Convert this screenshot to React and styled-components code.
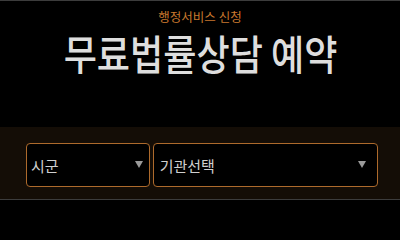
import React from "react";
import styled, { createGlobalStyle } from "styled-components";

const Global = createGlobalStyle`
  html, body { margin: 0; padding: 0; background: #000; }
  body { font-family: "Noto Sans CJK KR", "Noto Sans", sans-serif; }
`;

const Page = styled.div`
  width: 400px;
  height: 200px;
  display: flex;
  flex-direction: column;
  border-top: 1px solid #3c3c3c;
  border-bottom: 1px solid #3c3c3c;
  box-sizing: border-box;
  background: #000;
  overflow: hidden;
`;

const Header = styled.header`
  height: 126px;
  display: flex;
  flex-direction: column;
  align-items: center;
  padding-top: 7px;
  box-sizing: border-box;
`;

const Eyebrow = styled.div`
  font-size: 12.5px;
  line-height: 18px;
  color: #c8782e;
`;

const Title = styled.h1`
  margin: 6px 0 0;
  font-size: 41px;
  line-height: 40px;
  font-weight: 500;
  color: #dedede;
  white-space: nowrap;
  transform: scaleX(0.88);
`;

const Filters = styled.div`
  flex: 1;
  background: #140d06;
  display: flex;
  gap: 3px;
  padding: 16px 22px 0 26px;
  box-sizing: border-box;
`;

const Select = styled.div`
  width: ${(p) => p.$w}px;
  height: 44px;
  box-sizing: border-box;
  border: 1px solid #ad6a2c;
  border-radius: 4px;
  background: #000;
  display: flex;
  align-items: center;
  justify-content: space-between;
  padding: 0 ${(p) => p.$pr}px 0 ${(p) => p.$pl}px;
  color: #cfcfcf;
  font-size: 15px;
`;

const Arrow = styled.span`
  width: 0;
  height: 0;
  margin-top: -2px;
  border-left: 4.5px solid transparent;
  border-right: 4.5px solid transparent;
  border-top: 7px solid #9a9a9a;
`;

export default function App() {
  return (
    <>
      <Global />
      <Page>
        <Header>
          <Eyebrow>행정서비스 신청</Eyebrow>
          <Title>무료법률상담 예약</Title>
        </Header>
        <Filters>
          <Select $w={124} $pl={4} $pr={6}>
            <span>시군</span>
            <Arrow />
          </Select>
          <Select $w={226} $pl={6} $pr={11}>
            <span>기관선택</span>
            <Arrow />
          </Select>
        </Filters>
      </Page>
    </>
  );
}
